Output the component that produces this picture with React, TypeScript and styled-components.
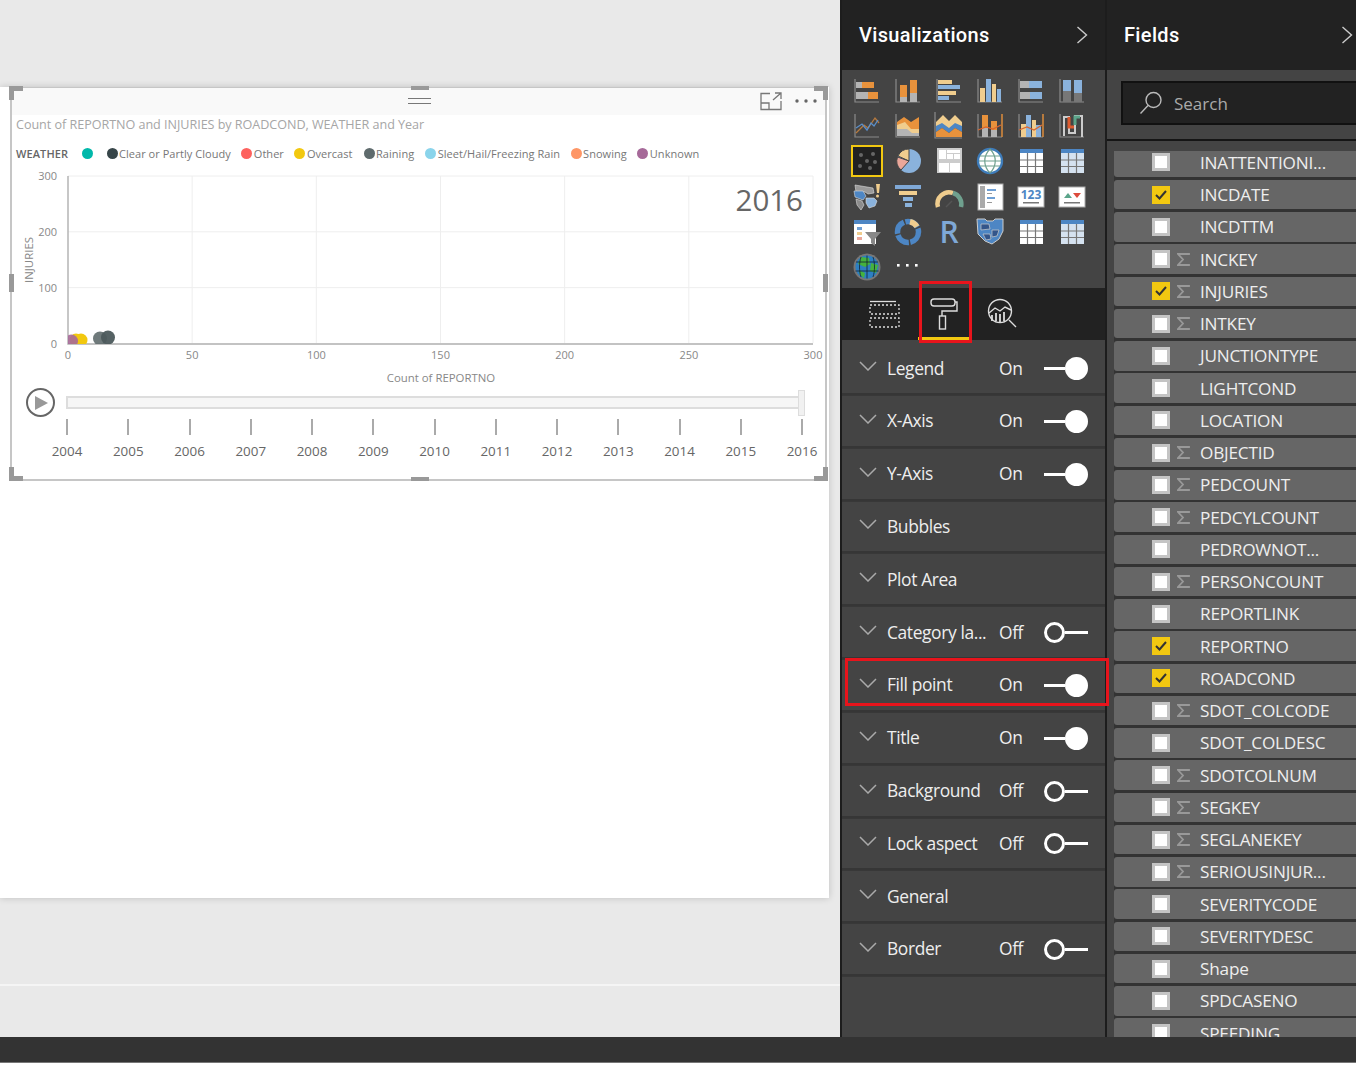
import React from "react";
import styled, { createGlobalStyle } from "styled-components";

const Global = createGlobalStyle`
  html, body { margin: 0; padding: 0; background: #fff; }
  body { font-family: "Open Sans", "Liberation Sans", sans-serif; }
  * { box-sizing: border-box; }
`;

const Root = styled.div`
  width: 1356px;
  height: 1070px;
  display: flex;
  flex-direction: column;
`;
const Main = styled.div`
  height: 1037px;
  display: flex;
  overflow: hidden;
`;
const StatusBar = styled.div`
  height: 26px;
  background: #333;
  border-bottom: 1px solid #777;
`;
const Canvas = styled.div`
  width: 840px;
  background: #e9e9e9;
  padding-top: 87px;
  display: flex;
  flex-direction: column;
`;
const PageCard = styled.div`
  width: 829px;
  height: 811px;
  background: #fff;
  box-shadow: 0 0 7px rgba(0, 0, 0, 0.18);
  padding-left: 10px;
`;
const CanvasRule = styled.div`
  margin-top: 86px;
  height: 2px;
  background: #f5f5f5;
`;
const Frame = styled.div`
  position: relative;
  width: 817px;
  height: 394px;
  border: 2px solid #c6c6c6;
  border-top-width: 1px;
  display: flex;
  flex-direction: column;
`;
const CornerMark = styled.span<{ $v: "top" | "bottom"; $h: "left" | "right" }>`
  position: absolute;
  width: 14px;
  height: 14px;
  ${(p) => p.$v}: -2px;
  ${(p) => p.$h}: -3px;
  border-${(p) => p.$v}: 5px solid #999;
  border-${(p) => p.$h}: 5px solid #999;
`;
const SideGrip = styled.span<{ $side: "left" | "right" }>`
  position: absolute;
  top: 186px;
  ${(p) => p.$side}: -3px;
  width: 5px;
  height: 18px;
  background: #999;
`;
const EdgeGrip = styled.span<{ $side: "top" | "bottom" }>`
  position: absolute;
  left: 399px;
  ${(p) => p.$side}: -2px;
  width: 18px;
  height: 4px;
  background: #999;
`;
const VisualHead = styled.div`
  height: 27px;
  background: #f9f9f9;
  display: grid;
  grid-template-columns: 1fr auto 1fr;
  align-items: center;
`;
const MoveGrip = styled.div`
  grid-column: 2;
  width: 23px;
  height: 6px;
  margin: 0 0 1px 1px;
  border-top: 1px solid #777;
  border-bottom: 1px solid #777;
`;
const HeadTools = styled.div`
  grid-column: 3;
  display: flex;
  justify-content: flex-end;
  align-items: center;
  gap: 13px;
  padding-right: 8px;
`;
const MoreDots = styled.svg`
  margin-bottom: 2px;
`;
const VisualTitle = styled.div`
  height: 19px;
  line-height: 19px;
  padding-left: 4px;
  font-size: 12.6px;
  letter-spacing: -0.04px;
  color: #a6a6a6;
  white-space: nowrap;
`;
const Legend = styled.div`
  margin-top: 10px;
  height: 18px;
  padding-left: 4px;
  display: flex;
  align-items: center;
  font-size: 11px;
  letter-spacing: 0.04px;
  color: #777;
  white-space: nowrap;
`;
const LegendName = styled.span`
  width: 66px;
  font-weight: 600;
  color: #666;
  letter-spacing: 0.1px;
`;
const LegendItem = styled.span<{ $gap: number }>`
  display: flex;
  align-items: center;
  gap: 1.5px;
  margin-right: ${(p) => p.$gap}px;
`;
const LegendDot = styled.i<{ $c: string }>`
  width: 11px;
  height: 11px;
  border-radius: 50%;
  background: ${(p) => p.$c};
`;
const ChartSvg = styled.svg`
  display: block;
  margin-top: 3px;
  width: 813px;
  height: 225px;
  text {
    font-family: "Open Sans", "Liberation Sans", sans-serif;
    font-size: 11px;
    fill: #888;
  }
`;
const AxisTitle = styled.text`
  && {
    font-size: 11.4px;
  }
`;
const BigYear = styled.text`
  && {
    font-size: 29.5px;
    fill: #666;
  }
`;
const PlayRow = styled.div`
  height: 26px;
  display: flex;
  align-items: center;
  padding-left: 14px;
`;
const PlayButton = styled.div`
  width: 29px;
  height: 29px;
  flex: none;
  border: 2px solid #666;
  border-radius: 50%;
  background: #fff;
  display: flex;
  align-items: center;
  justify-content: center;
  padding-left: 2px;
  margin-bottom: 1px;
  &::before {
    content: "";
    border-left: 13px solid #999;
    border-top: 7px solid transparent;
    border-bottom: 7px solid transparent;
  }
`;
const Track = styled.div`
  position: relative;
  margin-left: 11px;
  width: 739px;
  height: 13px;
  background: #f6f6f6;
  border: 2px solid #ddd;
  margin-bottom: 1px;
`;
const Thumb = styled.span`
  position: absolute;
  right: -2px;
  top: -8px;
  width: 7px;
  height: 26px;
  background: #f1f1f1;
  border: 1px solid #ddd;
`;
const Years = styled.div`
  margin-top: 3px;
  padding-left: 35px;
  width: 810px;
  display: flex;
  justify-content: space-between;
`;
const Year = styled.div`
  width: 40px;
  display: flex;
  flex-direction: column;
  align-items: center;
  font-size: 13.4px;
  line-height: 19px;
  color: #666;
  &::before {
    content: "";
    width: 2px;
    height: 16px;
    margin-bottom: 7px;
    background: #aaa;
  }
`;

const Panel = styled.aside<{ $w: number }>`
  width: ${(p) => p.$w}px;
  flex: none;
  background: #444;
  border-left: 2px solid #1d1d1d;
  display: flex;
  flex-direction: column;
  color: #fff;
`;
const PanelHead = styled.header`
  height: 70px;
  flex: none;
  background: #222;
  display: flex;
  align-items: center;
  justify-content: space-between;
  font-family: Roboto, "Noto Sans", sans-serif;
  font-size: 20px;
  font-weight: 500;
  letter-spacing: 0.35px;
`;
const VizHead = styled(PanelHead)`
  padding: 0 17px 0 17px;
`;
const FieldHead = styled(PanelHead)`
  padding: 0 3px 0 17px;
`;
const IconGrid = styled.div`
  height: 218px;
  flex: none;
  padding: 3.5px 0 0 4px;
  display: grid;
  grid-template-columns: repeat(6, 41px);
  grid-auto-rows: 35.2px;
  justify-items: center;
  align-items: center;
`;
const IconSvg = styled.svg`
  display: block;
  width: 28px;
  height: 28px;
  overflow: visible;
  text {
    font-family: "Open Sans", "Liberation Sans", sans-serif;
  }
`;
const SelectedCell = styled.div`
  width: 32px;
  height: 32px;
  border: 2px solid #f2c811;
  background: #222;
  display: flex;
  align-items: center;
  justify-content: center;
`;
const TabBar = styled.div`
  position: relative;
  height: 52px;
  flex: none;
  background: #222;
  display: flex;
  padding-left: 17px;
`;
const Tab = styled.div<{ $active?: boolean }>`
  width: 52px;
  height: 52px;
  margin-right: 6.5px;
  display: flex;
  align-items: center;
  justify-content: center;
  padding-top: 2px;
  border-bottom: 3px solid ${(p) => (p.$active ? "#f2c811" : "transparent")};
`;
const TabHighlight = styled.div`
  position: absolute;
  left: 77px;
  top: -7px;
  width: 53px;
  height: 62px;
  border: 3px solid #e8141c;
  pointer-events: none;
`;
const Sections = styled.div`
  flex: 1;
  padding-top: 3px;
  display: grid;
  grid-auto-rows: 50px;
  row-gap: 2.82px;
  align-content: start;
  background: #444;
`;
const SectionRow = styled.div`
  position: relative;
  display: flex;
  align-items: center;
  padding: 0 17px;
  font-size: 17.4px;
  letter-spacing: -0.38px;
  color: #eee;
  box-shadow: 0 2.8px 0 #363636;
`;
const SectionChevron = styled.svg`
  width: 18px;
  height: 10px;
  flex: none;
  margin: -4px 10px 0 0;
`;
const SectionName = styled.span`
  width: 112px;
  margin-top: -1px;
  white-space: nowrap;
`;
const SectionState = styled.span`
  width: 45px;
  margin-top: -1px;
`;
const Toggle = styled.div<{ $on: boolean }>`
  width: 44px;
  height: 22px;
  margin-top: 1px;
  display: flex;
  flex-direction: ${(p) => (p.$on ? "row-reverse" : "row")};
  align-items: center;
  &::after {
    content: "";
    flex: 1;
    height: 3px;
    background: #fff;
  }
`;
const Knob = styled.span<{ $on: boolean }>`
  width: ${(p) => (p.$on ? 23 : 21)}px;
  height: ${(p) => (p.$on ? 23 : 21)}px;
  border-radius: 50%;
  background: ${(p) => (p.$on ? "#fff" : "transparent")};
  border: 3px solid #fff;
`;
const RowHighlight = styled.div`
  position: absolute;
  left: 3px;
  top: -2px;
  width: 264px;
  height: 48px;
  border: 3px solid #e8141c;
  pointer-events: none;
`;

const SearchZone = styled.div`
  height: 71px;
  flex: none;
  padding: 11px 0 0 14px;
  border-bottom: 2px solid #151515;
`;
const SearchBox = styled.div`
  height: 44px;
  background: #222;
  border: 2px solid #111;
  border-right: none;
  display: flex;
  align-items: center;
  gap: 11px;
  padding-left: 16px;
  font-size: 17px;
  color: #aaa;
`;
const FieldViewport = styled.div`
  margin-top: 10px;
  flex: 1;
  overflow: hidden;
  padding-left: 7px;
`;
const FieldStack = styled.div`
  margin-top: -3.5px;
  background: #333;
  display: grid;
  grid-auto-rows: 29.5px;
  row-gap: 2.75px;
`;
const FieldRow = styled.div`
  display: flex;
  align-items: center;
  background: #666;
  border-radius: 3px 0 0 3px;
  padding-left: 38px;
  font-size: 17.2px;
  letter-spacing: -0.2px;
  color: #eee;
  white-space: nowrap;
`;
const CheckBox = styled.span<{ $on: boolean }>`
  width: 18px;
  height: 18px;
  flex: none;
  display: flex;
  align-items: center;
  justify-content: center;
  background: ${(p) => (p.$on ? "#f2c811" : "#fff")};
  border: 3px solid ${(p) => (p.$on ? "#f2c811" : "#c4c4c4")};
`;
const SigmaSlot = styled.span`
  width: 30px;
  padding-left: 7px;
  flex: none;
  display: flex;
  align-items: center;
`;

const GA = "#8a8a8a";
const OR = "#e8923c";
const BL = "#8ab2dc";
const TN = "#f0cd8e";
const GR = "#b4b4b4";
const W = "#fff";

const Ax = ({ r }: { r?: string }) => (
  <>
    <path d="M2 2v23h24" fill="none" stroke={GA} strokeWidth="1.2" />
    {r && <path d="M26 2v23" fill="none" stroke={r} strokeWidth="1.4" />}
  </>
);
const Rects = ({ list }: { list: [number, number, number, number, string][] }) => (
  <>
    {list.map(([x, y, w, h, c], i) => (
      <rect key={i} x={x} y={y} width={w} height={h} fill={c} />
    ))}
  </>
);
const TableGlyph = ({ body }: { body: string }) => (
  <>
    <rect x="3" y="2" width="23" height="4" fill="#4d86c4" />
    <rect x="3" y="6" width="23" height="20" fill={body} />
    <path d="M3 13h23M3 19.500h23M10.500 6v20M18.500 6v20" stroke="#777" strokeWidth="1.2" />
  </>
);
const icons: React.ReactNode[] = [
  <><Ax /><Rects list={[[3, 5, 6, 6, GR], [9, 5, 12, 6, OR], [3, 15, 12, 7, GR], [15, 15, 10, 7, OR]]} /></>,
  <><Ax /><Rects list={[[6, 20, 7, 5, GR], [6, 8, 7, 12, OR], [16, 16, 7, 9, GR], [16, 3, 7, 13, OR]]} /></>,
  <><Ax /><Rects list={[[3, 3, 14, 4, TN], [3, 8, 22, 4, BL], [3, 14, 18, 4, TN], [3, 19, 11, 4, BL]]} /></>,
  <><Ax /><Rects list={[[4, 11, 5, 14, TN], [10, 2, 5, 23, BL], [16, 7, 4, 18, TN], [21, 12, 4, 13, BL]]} /></>,
  <><Ax /><Rects list={[[3, 4, 9, 7, GR], [12, 4, 13, 7, BL], [3, 15, 10, 7, GR], [13, 15, 12, 7, BL]]} /></>,
  <><Ax /><Rects list={[[5, 14, 8, 11, "#777"], [5, 3, 8, 11, BL], [16, 16, 8, 9, "#777"], [16, 3, 8, 13, BL]]} /></>,
  <><Ax /><path d="M3 21l8-8 4 3 7-10 4 5" fill="none" stroke={OR} strokeOpacity=".7" strokeWidth="1.3" /><path d="M3 16l6-4 5 6 4-7 3 3 4-6" fill="none" stroke="#5b8fca" strokeWidth="1.3" /></>,
  <><Ax /><path d="M3 10l7-5 7 5 8-5v19H3z" fill={OR} /><path d="M3 13l8-3 6 7 8 0v7H3z" fill={TN} /><path d="M3 17l10 0 5 4 7 0v3H3z" fill={GR} /></>,
  <><path d="M0 0v26h27" fill="none" stroke={GA} strokeWidth="1.2" /><path d="M1 10l7-7 6 6 6-6 7 7v6H1z" fill={TN} /><path d="M1 14l6-3 7 5 6-5 7 3v6l-7-4-6 5-7-5-6 4z" fill="#4d86c4" /><path d="M1 20l6-4 7 5 6-5 7 4v5H1z" fill={OR} /></>,
  <><Ax r={OR} /><Rects list={[[6, 16, 6, 9, GR], [6, 3, 6, 13, OR], [15, 18, 6, 7, GR], [15, 9, 6, 9, OR]]} /><path d="M2 18l8-3 7 2 8-4" fill="none" stroke="#d9662e" strokeWidth="1.3" /></>,
  <><Ax r={OR} /><Rects list={[[4, 12, 5, 13, TN], [9, 3, 5, 22, BL], [15, 8, 4, 17, TN], [19, 13, 5, 12, BL]]} /><path d="M2 18l8-3 7 3 8-5" fill="none" stroke="#d9662e" strokeWidth="1.3" /></>,
  <><Ax /><path d="M6 24V5h5v16h6V4h7v21" fill="none" stroke="#ccc" strokeWidth="2" /><path d="M11 5v10h5" fill="none" stroke="#dd5a2e" strokeWidth="3" /><path d="M17 13V5h5" fill="none" stroke="#5ba58a" strokeWidth="3" /></>,
  <svg key="s" width="28" height="28" viewBox="0 0 28 28"><g fill="#666"><circle cx="8" cy="8" r="2" /><circle cx="20" cy="7" r="2" /><circle cx="14" cy="14" r="2" /><circle cx="7" cy="19" r="2" /><circle cx="22" cy="15" r="2" /><circle cx="17" cy="21" r="2" /></g></svg>,
  <><circle cx="15" cy="14" r="12" fill="#8ab2dc" /><path d="M15 14L15 2A12 12 0 0 0 4 9z" fill={TN} stroke="#444" /><path d="M15 14L3.500 10A12 12 0 0 0 7 23z" fill="#eaa79a" stroke="#444" /></>,
  <><rect x="2" y="1" width="25" height="25" fill="#ccc" /><Rects list={[[4, 3, 7, 9, W], [12, 3, 13, 3, W], [12, 7, 6, 5, W], [19, 7, 6, 5, W], [4, 16, 10, 9, W], [15, 16, 10, 9, W]]} /></>,
  <><circle cx="14" cy="14" r="12" fill="#fff" stroke="#3e7cba" strokeWidth="2.4" /><path d="M4 9h20M3 14h22M4 19h20M14 2c-7 7-7 17 0 24M14 2c7 7 7 17 0 24" fill="none" stroke="#6fa08e" strokeWidth="1.2" /></>,
  <TableGlyph body="#fff" />,
  <TableGlyph body="#d5e2f0" />,
  <><path d="M2 2l18 3 1 5-6 1-3-2-9 0z" fill="#9a9a9a" stroke="#ddd" strokeWidth=".6" /><path d="M1 8l9 0 3 5-3 4-8-3z" fill="#4d86c4" stroke="#ddd" strokeWidth=".6" /><path d="M3 16l6 2 2 4-3 5-4-5z" fill="#8c8c8c" stroke="#ddd" strokeWidth=".6" /><path d="M13 15l8 0 3 3-2 5-6 2-3-5z" fill="#8ab2dc" stroke="#ddd" strokeWidth=".6" /><path d="M23 1h4l-1 9h-2z" fill={TN} /><circle cx="24.500" cy="13" r="1.500" fill={TN} /></>,
  <><Rects list={[[1, 2, 26, 4, "#7fa8d6"], [5, 8, 18, 4, TN], [9, 14, 10, 4, BL], [11, 20, 7, 4, BL]]} /></>,
  <><path d="M3 24A11.500 11.500 0 0 1 18 10" fill="none" stroke={TN} strokeWidth="4.500" /><path d="M18 10A11.500 11.500 0 0 1 26 24" fill="none" stroke="#6fa08e" strokeWidth="4.500" /><path d="M11 24l6-6" stroke="#555" strokeWidth="1.5" /></>,
  <><rect x="2" y="1" width="25" height="26" fill="#fff" stroke="#aaa" /><rect x="4" y="3" width="5" height="22" fill="#aaa" /><Rects list={[[11, 6, 9, 2, "#6e9fd4"], [11, 10, 5, 1, "#999"], [11, 14, 8, 2, "#6e9fd4"], [11, 19, 5, 1, "#999"]]} /></>,
  <><rect x="1" y="4" width="26" height="20" fill="#fff" stroke="#aaa" /><text x="14" y="16" fontSize="12" fontWeight="700" fill="#4d86c4" textAnchor="middle">123</text><rect x="6" y="19" width="16" height="1.500" fill="#777" /></>,
  <><rect x="1" y="4" width="26" height="20" fill="#fff" stroke="#aaa" /><path d="M6 15l4-5 4 5z" fill="#5ba58a" /><path d="M15 10h8l-4 5z" fill="#dd4b3c" /><rect x="6" y="19" width="16" height="1.500" fill="#777" /></>,
  <><rect x="1" y="2" width="22" height="24" fill="#fff" /><rect x="1" y="2" width="22" height="4" fill="#4d86c4" /><Rects list={[[4, 9, 5, 3, "#6e9fd4"], [4, 14, 5, 3, TN], [4, 19, 5, 3, "#eaa79a"]]} /><path d="M12 14h16l-6 7v7l-4-3v-4z" fill="#888" /></>,
  <><circle cx="14" cy="14" r="10.500" fill="none" stroke="#4d86c4" strokeWidth="5.500" strokeDasharray="14 1.500" /><path d="M16 3.700a10.500 10.500 0 0 1 7 5" fill="none" stroke={TN} strokeWidth="5.500" /></>,
  <><text x="14" y="25" fontSize="30" fontWeight="600" fill="#7fa8d6" textAnchor="middle">R</text></>,
  <><path d="M1 1h8l2 2h6l2-2h8v12l-4 8-7 5-7-3-7-7z" fill="#4d86c4" stroke="#ccc" /><path d="M5 6h8l1 5-9 1zM16 12h7l-2 6-5 1zM7 16h7l1 5-5 1z" fill="#33558a" stroke="#ccc" strokeWidth=".7" /></>,
  <TableGlyph body="#fff" />,
  <TableGlyph body="#d5e2f0" />,
  <><circle cx="14" cy="14" r="13.500" fill="#777" /><circle cx="14" cy="14" r="11.500" fill="#2d7fc2" /><path d="M8 4l8 1 1 6-5 3-7-3zM18 10l7 2-2 8-6-2zM6 17l6 3-1 5-4-3z" fill="#45b23e" /><path d="M3 9h22M2.500 18h23M14 2.500v23M8 4c-2 6-2 14 0 20M20 4c2 6 2 14 0 20" fill="none" stroke="#123" strokeWidth=".8" /></>,
  <><rect x="3" y="11" width="2.600" height="2.600" fill={W} /><rect x="12" y="11" width="2.600" height="2.600" fill={W} /><rect x="21" y="11" width="2.600" height="2.600" fill={W} /></>,
];

const weather: [string, string, number][] = [
  ["", "#01b8aa", 13.5],
  ["Clear or Partly Cloudy", "#374649", 10.5],
  ["Other", "#fd625e", 10.5],
  ["Overcast", "#f2c80f", 11],
  ["Raining", "#5f6b6d", 11],
  ["Sleet/Hail/Freezing Rain", "#8ad4eb", 10.5],
  ["Snowing", "#fe9666", 10.5],
  ["Unknown", "#a66999", 0],
];
const years = Array.from({ length: 13 }, (_, i) => 2004 + i);
const xTicks = [0, 50, 100, 150, 200, 250, 300];
const yTicks = [300, 200, 100, 0];

const sections: [string, string?][] = [
  ["Legend", "On"],
  ["X-Axis", "On"],
  ["Y-Axis", "On"],
  ["Bubbles"],
  ["Plot Area"],
  ["Category la...", "Off"],
  ["Fill point", "On"],
  ["Title", "On"],
  ["Background", "Off"],
  ["Lock aspect", "Off"],
  ["General"],
  ["Border", "Off"],
];

const fields: [string, boolean, boolean][] = [
  ["INATTENTIONI...", false, false],
  ["INCDATE", false, true],
  ["INCDTTM", false, false],
  ["INCKEY", true, false],
  ["INJURIES", true, true],
  ["INTKEY", true, false],
  ["JUNCTIONTYPE", false, false],
  ["LIGHTCOND", false, false],
  ["LOCATION", false, false],
  ["OBJECTID", true, false],
  ["PEDCOUNT", true, false],
  ["PEDCYLCOUNT", true, false],
  ["PEDROWNOT...", false, false],
  ["PERSONCOUNT", true, false],
  ["REPORTLINK", false, false],
  ["REPORTNO", false, true],
  ["ROADCOND", false, true],
  ["SDOT_COLCODE", true, false],
  ["SDOT_COLDESC", false, false],
  ["SDOTCOLNUM", true, false],
  ["SEGKEY", true, false],
  ["SEGLANEKEY", true, false],
  ["SERIOUSINJUR...", true, false],
  ["SEVERITYCODE", false, false],
  ["SEVERITYDESC", false, false],
  ["Shape", false, false],
  ["SPDCASENO", false, false],
  ["SPEEDING", false, false],
];

const HeadChevron = () => (
  <svg width="12" height="18" viewBox="0 0 12 18" fill="none" stroke="#ccc" strokeWidth="1.4">
    <path d="M1.500 1l9 8-9 8" />
  </svg>
);

const Chart = () => {
  const xAt = (v: number) => 68 + (v / 300) * 745;
  const yAt = (v: number) => 343.5 - (v / 300) * 167.500;
  return (
    <ChartSvg viewBox="12 165 813 225">
      <defs>
        <clipPath id="plot">
          <rect x="68" y="176" width="745" height="168" />
        </clipPath>
      </defs>
      {xTicks.map((v) => (
        <g key={v}>
          {v > 0 && <path d={`M${xAt(v)} 176V343`} stroke="#eee" />}
          <text x={xAt(v)} y="359" textAnchor="middle">{v}</text>
        </g>
      ))}
      {yTicks.map((v) => (
        <g key={v}>
          {v > 0 && <path d={`M68 ${yAt(v)}H813`} stroke="#eee" />}
          <text x="57" y={yAt(v) + 4} textAnchor="end">{v}</text>
        </g>
      ))}
      <path d="M68 176V344H813" fill="none" stroke="#b0b0b0" strokeWidth="1.4" />
      <g clipPath="url(#plot)">
        <circle cx="76" cy="340" r="6.500" fill="#f2c80f" />
        <circle cx="81" cy="340" r="6.500" fill="#f2c80f" />
        <circle cx="71.500" cy="341" r="6.500" fill="#a66999" opacity=".9" />
        <circle cx="100" cy="338.500" r="7" fill="#5f6b6d" opacity=".9" />
        <circle cx="108" cy="337.500" r="7" fill="#4c5a5c" opacity=".95" />
      </g>
      <AxisTitle x="441" y="382" textAnchor="middle">Count of REPORTNO</AxisTitle>
      <AxisTitle transform="translate(33 260) rotate(-90)" textAnchor="middle">INJURIES</AxisTitle>
      <BigYear x="803" y="211" textAnchor="end">2016</BigYear>
    </ChartSvg>
  );
};

export default function App() {
  return (
    <Root>
      <Global />
      <Main>
        <Canvas>
          <PageCard>
            <Frame>
              <CornerMark $v="top" $h="left" />
              <CornerMark $v="top" $h="right" />
              <CornerMark $v="bottom" $h="left" />
              <CornerMark $v="bottom" $h="right" />
              <SideGrip $side="left" />
              <SideGrip $side="right" />
              <EdgeGrip $side="top" />
              <EdgeGrip $side="bottom" />
              <VisualHead>
                <MoveGrip />
                <HeadTools>
                  <svg width="22" height="19" viewBox="0 0 22 19" fill="none" stroke="#777" strokeWidth="1.300">
                    <path d="M10 1.500H1v16h20V9M1 11h8v6.500M13 8l8-7M15 1h6v6" />
                  </svg>
                  <MoreDots width="22" height="4" viewBox="0 0 22 4" fill="#666">
                    <circle cx="2" cy="2" r="1.700" />
                    <circle cx="11" cy="2" r="1.700" />
                    <circle cx="20" cy="2" r="1.700" />
                  </MoreDots>
                </HeadTools>
              </VisualHead>
              <VisualTitle>Count of REPORTNO and INJURIES by ROADCOND, WEATHER and Year</VisualTitle>
              <Legend>
                <LegendName>WEATHER</LegendName>
                {weather.map(([name, c, gap]) => (
                  <LegendItem key={c} $gap={gap}>
                    <LegendDot $c={c} />
                    {name}
                  </LegendItem>
                ))}
              </Legend>
              <Chart />
              <PlayRow>
                <PlayButton />
                <Track>
                  <Thumb />
                </Track>
              </PlayRow>
              <Years>
                {years.map((y) => (
                  <Year key={y}>{y}</Year>
                ))}
              </Years>
            </Frame>
          </PageCard>
          <CanvasRule />
        </Canvas>

        <Panel $w={265}>
          <VizHead>
            Visualizations
            <HeadChevron />
          </VizHead>
          <IconGrid>
            {icons.map((ic, i) =>
              i === 12 ? (
                <SelectedCell key={i}>{ic}</SelectedCell>
              ) : (
                <IconSvg key={i} viewBox="0 0 28 28">
                  {ic}
                </IconSvg>
              )
            )}
          </IconGrid>
          <TabBar>
            <Tab>
              <svg width="32" height="28" viewBox="0 0 32 28" fill="none" stroke="#ddd" strokeWidth="1.300">
                <path d="M1 1.500h26" />
                <path d="M1 5h29v9H1zM1 18h29v9H1z" strokeDasharray="2 2" />
              </svg>
            </Tab>
            <Tab $active>
              <svg width="28" height="34" viewBox="0 0 28 34" fill="none" stroke="#ddd" strokeWidth="1.400">
                <rect x="1" y="2" width="24" height="7" rx="3" />
                <path d="M25 5h2v9H12v5" />
                <rect x="9.500" y="19" width="6" height="13" />
              </svg>
            </Tab>
            <Tab>
              <svg width="30" height="31" viewBox="0 0 30 31" fill="none" stroke="#ddd" strokeWidth="1.400">
                <circle cx="13" cy="13" r="11.500" />
                <path d="M22 22l7 7M2 15l6-5 5 3 5-4 6 3" />
                <path d="M5 17v6M9 15v8M13 16v8M17 14v9" strokeWidth="1.800" />
              </svg>
            </Tab>
            <TabHighlight />
          </TabBar>
          <Sections>
            {sections.map(([name, state]) => (
              <SectionRow key={name}>
                <SectionChevron viewBox="0 0 18 10" fill="none" stroke="#aaa" strokeWidth="1.500">
                  <path d="M1 1l8 8 8-8" />
                </SectionChevron>
                <SectionName>{name}</SectionName>
                {state && (
                  <>
                    <SectionState>{state}</SectionState>
                    <Toggle $on={state === "On"}>
                      <Knob $on={state === "On"} />
                    </Toggle>
                  </>
                )}
                {name === "Fill point" && <RowHighlight />}
              </SectionRow>
            ))}
          </Sections>
        </Panel>

        <Panel $w={251}>
          <FieldHead>
            Fields
            <HeadChevron />
          </FieldHead>
          <SearchZone>
            <SearchBox>
              <svg width="24" height="24" viewBox="0 0 24 24" fill="none" stroke="#bbb" strokeWidth="1.400">
                <circle cx="14.500" cy="9" r="7.500" />
                <path d="M9 14.500L1.500 22.500" />
              </svg>
              Search
            </SearchBox>
          </SearchZone>
          <FieldViewport>
            <FieldStack>
              {fields.map(([name, sigma, on]) => (
                <FieldRow key={name}>
                  <CheckBox $on={on}>
                    {on && (
                      <svg width="12" height="10" viewBox="0 0 12 10" fill="none" stroke="#333" strokeWidth="2">
                        <path d="M1 5l3.500 3.500L11 1" />
                      </svg>
                    )}
                  </CheckBox>
                  <SigmaSlot>
                    {sigma && (
                      <svg width="13" height="13" viewBox="0 0 13 13" fill="none" stroke="#999" strokeWidth="1.800">
                        <path d="M12 2V1H1l5 5.500L1 12h11v-1" />
                      </svg>
                    )}
                  </SigmaSlot>
                  {name}
                </FieldRow>
              ))}
            </FieldStack>
          </FieldViewport>
        </Panel>
      </Main>
      <StatusBar />
    </Root>
  );
}
